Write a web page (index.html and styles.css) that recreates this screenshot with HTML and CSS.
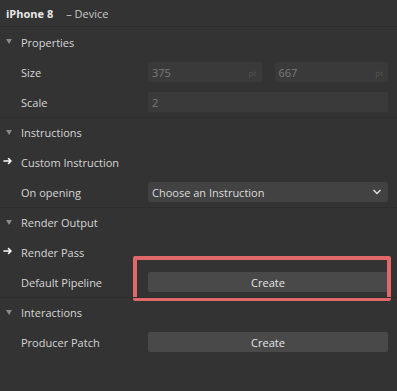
FILE: index.html
```html
<!DOCTYPE html>
<html lang="en">
<head>
    <meta charset="UTF-8">
    <meta name="viewport" content="width=device-width, initial-scale=1.0">
    <title>Device Inspector</title>
    <link rel="stylesheet" href="styles.css">
</head>
<body>
    <div class="panel">
        <div class="title">
            <span class="title-name">iPhone 8</span>
            <span class="title-type">&ndash; Device</span>
        </div>

        <div class="row section">
            <span class="caret"></span><span class="label">Properties</span>
        </div>
        <div class="row">
            <span class="label">Size</span>
            <div class="control pair">
                <div class="field disabled"><span>375</span><span class="unit">pt</span></div>
                <div class="field disabled"><span>667</span><span class="unit">pt</span></div>
            </div>
        </div>
        <div class="row">
            <span class="label">Scale</span>
            <div class="control">
                <div class="field disabled"><span>2</span></div>
            </div>
        </div>

        <div class="row section">
            <span class="caret"></span><span class="label">Instructions</span>
        </div>
        <div class="row">
            <svg class="arrow" width="10" height="10" viewBox="0 0 10 10"><path d="M1 5h7M5.5 2.5L8 5 5.5 7.5" fill="none" stroke="#fff" stroke-width="1.6" stroke-linecap="round" stroke-linejoin="round"/></svg>
            <span class="label">Custom Instruction</span>
        </div>
        <div class="row">
            <span class="label">On opening</span>
            <div class="control">
                <div class="select">
                    <span>Choose an Instruction</span>
                    <svg width="10" height="6" viewBox="0 0 10 6"><path d="M1.5 1l3.5 3.5L8.5 1" fill="none" stroke="#ddd" stroke-width="1.5"/></svg>
                </div>
            </div>
        </div>

        <div class="row section">
            <span class="caret"></span><span class="label">Render Output</span>
        </div>
        <div class="row">
            <svg class="arrow" width="10" height="10" viewBox="0 0 10 10"><path d="M1 5h7M5.5 2.5L8 5 5.5 7.5" fill="none" stroke="#fff" stroke-width="1.6" stroke-linecap="round" stroke-linejoin="round"/></svg>
            <span class="label">Render Pass</span>
        </div>
        <div class="row highlighted">
            <span class="label">Default Pipeline</span>
            <div class="control">
                <button class="button">Create</button>
            </div>
            <div class="highlight"></div>
        </div>

        <div class="row section">
            <span class="caret"></span><span class="label">Interactions</span>
        </div>
        <div class="row">
            <span class="label">Producer Patch</span>
            <div class="control">
                <button class="button">Create</button>
            </div>
        </div>
    </div>
</body>
</html>
```

FILE: styles.css
```css
html, body {
    margin: 0;
    height: 100%;
    background: #333333;
}
body {
    font-family: "Open Sans", "Noto Sans", sans-serif;
    font-size: 11px;
    color: #d6d6d6;
}
.panel {
    width: 397px;
}
.title {
    height: 27px;
    display: flex;
    align-items: center;
    padding-left: 6px;
    box-sizing: border-box;
    border-bottom: 1px solid #2c2c2c;
}
.title-name {
    font-weight: bold;
    color: #e8e8e8;
    margin-right: 13px;
}
.title-type {
    color: #c8c8c8;
}
.row {
    position: relative;
    height: 30px;
    display: flex;
    align-items: center;
    padding-left: 21px;
}
.section {
    border-top: 1px solid #2d2d2d;
    height: 29px;
}
.title + .section {
    border-top: none;
    height: 30px;
}
.caret {
    position: absolute;
    left: 6px;
    top: 12px;
    width: 0;
    height: 0;
    border-left: 3px solid transparent;
    border-right: 3px solid transparent;
    border-top: 5px solid #8a8a8a;
}
.arrow {
    position: absolute;
    left: 3px;
    top: 9px;
}
.label {
    width: 127px;
    flex: none;
}
.control {
    width: 240px;
    display: flex;
}
.pair {
    gap: 13px;
}
.field {
    flex: 1;
    height: 20px;
    background: #3a3a3a;
    border-radius: 2px;
    display: flex;
    align-items: center;
    justify-content: space-between;
    padding: 0 5px 0 4px;
    box-sizing: border-box;
    color: #7a7a7a;
}
.unit {
    font-size: 8px;
    color: #555;
}
.select {
    flex: 1;
    height: 20px;
    background: #424242;
    border-radius: 2px;
    display: flex;
    align-items: center;
    justify-content: space-between;
    padding: 0 6px 0 4px;
    box-sizing: border-box;
    color: #dcdcdc;
}
.button {
    flex: 1;
    height: 20px;
    background: #494949;
    border: none;
    border-radius: 2px;
    font-family: inherit;
    font-size: 11px;
    color: #e6e6e6;
    padding: 0;
}
.highlight {
    position: absolute;
    left: 133px;
    top: -11px;
    width: 258px;
    height: 45px;
    border: 4px solid #e06868;
    border-radius: 2px;
    box-sizing: border-box;
}
```
